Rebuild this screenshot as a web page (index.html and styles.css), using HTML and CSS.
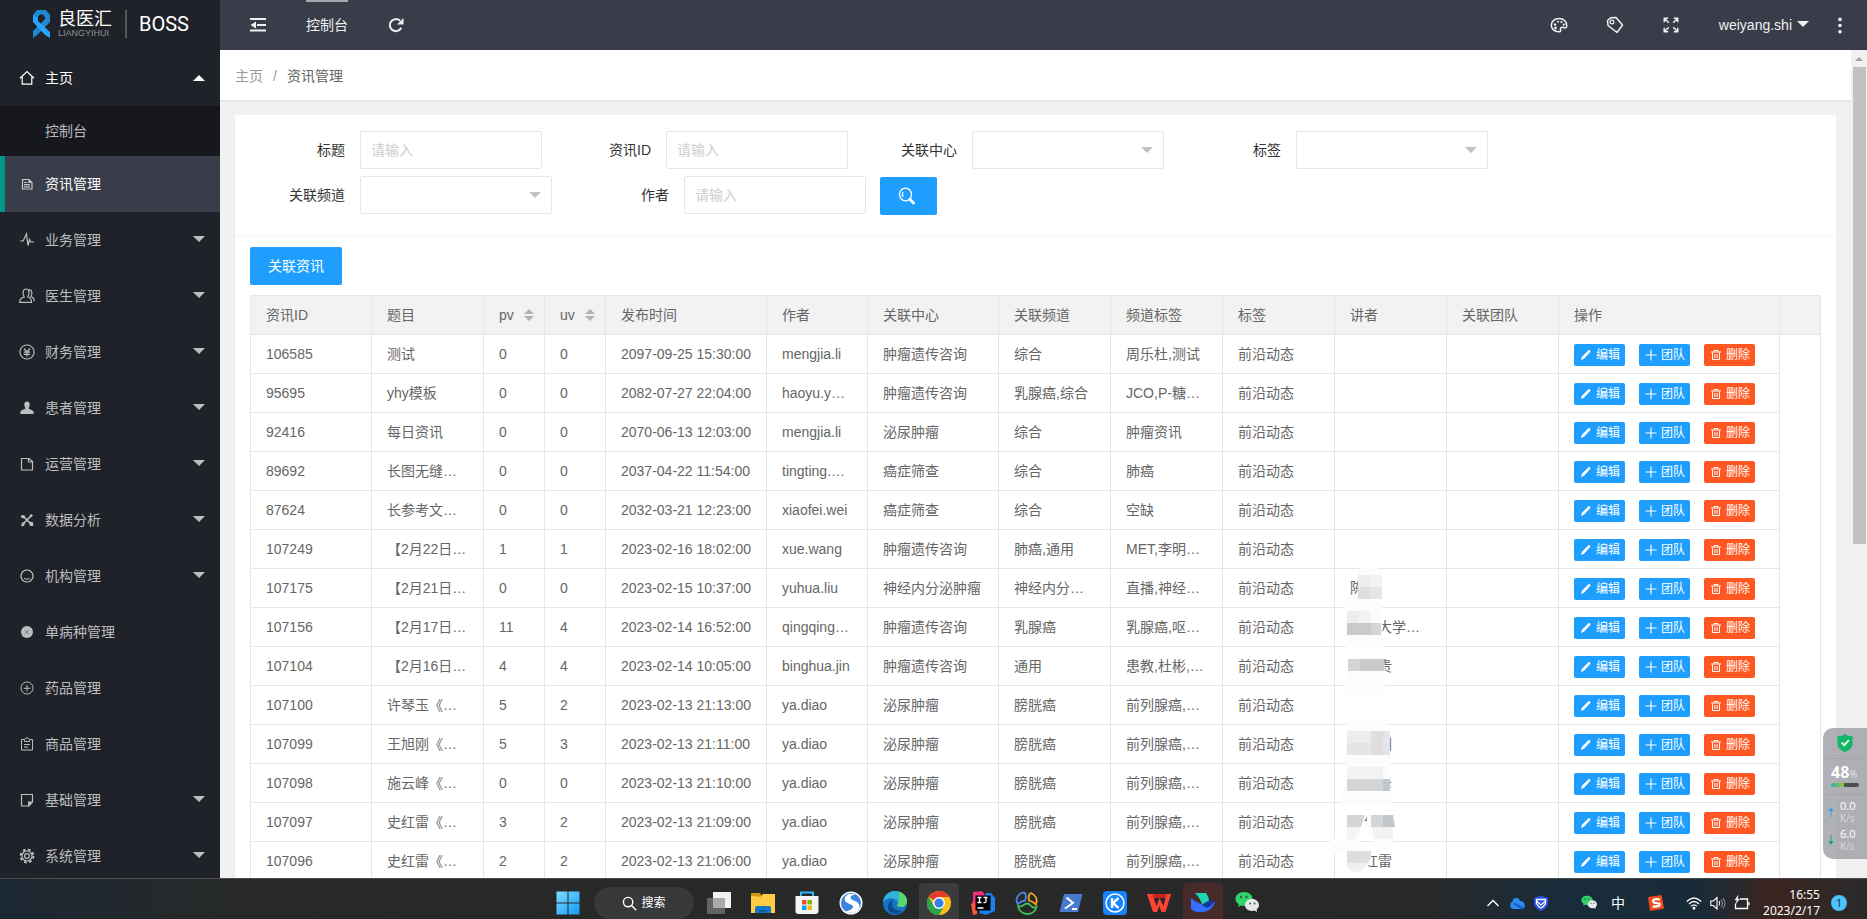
FILE: index.html
```html
<!DOCTYPE html>
<html lang="zh-CN">
<head>
<meta charset="utf-8">
<title>资讯管理</title>
<link rel="stylesheet" href="styles.css">
</head>
<body>
<svg class="sprite" aria-hidden="true">
  <symbol id="i-home" viewBox="0 0 16 16"><path d="M1 8.2 8 1.6l7 6.600M3.200 7v7.200h9.600V7" fill="none" stroke="currentColor" stroke-width="1.200"/></symbol>
  <symbol id="i-doc" viewBox="0 0 16 16"><path d="M3.500 3.500h6.500l3 3v6.500h-9.500z M10 3.500v3h3M5 6.500h3M5 8.700h6M5 10.900h6" fill="none" stroke="currentColor" stroke-width="1.200"/></symbol>
  <symbol id="i-pulse" viewBox="0 0 16 16"><path d="M1 9h3.200l1.300-3 2-4 1.500 11.500 1.500-6 1.200 2.500H15" fill="none" stroke="currentColor" stroke-width="1.200"/></symbol>
  <symbol id="i-users" viewBox="0 0 16 16"><path d="M5.200 9C3 5 4 1 7 1s4.200 4 1.800 8c3.200.8 3.700 2.500 3.700 5.300H.700C.7 11 2 9.800 5.200 9zM10 1.700c3.200.3 3.800 3.800 1.800 7 2.700.8 3.500 2.500 3.500 4.500" fill="none" stroke="currentColor" stroke-width="1.200"/></symbol>
  <symbol id="i-yen" viewBox="0 0 16 16"><path d="M8 1a7 7 0 1 0 .01 0zM5 4.500l3 3.500 3-3.500M4.800 8.200h6.400M4.800 10.300h6.400M8 8v4.500" fill="none" stroke="currentColor" stroke-width="1.200"/></symbol>
  <symbol id="i-user" viewBox="0 0 16 16"><path d="M8 1.500c2 0 3 1.500 2.700 3.500-.2 1.500-.9 2.500-1 3.300 0 1.500 5 1.200 5 4.200v1.500H1.300v-1.500c0-3 5-2.700 5-4.200-.1-.8-.8-1.800-1-3.300C5 3 6 1.500 8 1.500z" fill="currentColor"/></symbol>
  <symbol id="i-file" viewBox="0 0 16 16"><path d="M2.500 2.500h7.500l3.500 3v8.500h-11zM9.500 2.500v3.500h4" fill="none" stroke="currentColor" stroke-width="1.200"/></symbol>
  <symbol id="i-tools" viewBox="0 0 16 16"><path d="M4 4l8 8M12 4l-8 8" stroke="currentColor" stroke-width="1.700"/><path d="M2 3.200h3.500l.5 2.300-1.500 1-2.500-1zM14 3.200 12 5.500l-2-1L12 2zM3.200 10l2.800 2-1.500 2.200H2zM11.500 9.500l2.700 1V14h-2.700l-1.500-2.200z" fill="currentColor"/></symbol>
  <symbol id="i-face" viewBox="0 0 16 16"><path d="M8 2a6 6 0 1 0 .01 0z" fill="none" stroke="currentColor" stroke-width="1.200"/><path d="M5 10.500q3 1.600 6 0" fill="none" stroke="currentColor"/></symbol>
  <symbol id="i-cross" viewBox="0 0 16 16"><circle cx="8" cy="8" r="6" fill="currentColor"/><path d="m5.800 5.800 4.400 4.400m0-4.400-4.400 4.400" stroke="#777980"/></symbol>
  <symbol id="i-plusc" viewBox="0 0 16 16"><path d="M8 2a6 6 0 1 0 .01 0zM8 5v6.500M4.700 8.300h6.600" fill="none" stroke="currentColor"/></symbol>
  <symbol id="i-clip" viewBox="0 0 16 16"><path d="M5 3.500H2.500V14h11V3.500H11M5.500 5.500V3.500l1.500-1.500h2l1.500 1.500v2zM5 8.500h6M5 11h4" fill="none" stroke="currentColor"/></symbol>
  <symbol id="i-note" viewBox="0 0 16 16"><path d="M2.500 2.500h11v7.500l-3.500 4h-7.500z" fill="none" stroke="currentColor" stroke-width="1.200"/><path d="M9 9.500h4.500L9 14.500z" fill="currentColor"/></symbol>
  <symbol id="i-gear" viewBox="0 0 16 16"><circle cx="8" cy="8" r="6.400" fill="none" stroke="currentColor" stroke-width="2" stroke-dasharray="2.700 2.330"/><circle cx="8" cy="8" r="5" fill="none" stroke="currentColor" stroke-width="1.200"/><circle cx="8" cy="8" r="2.400" fill="none" stroke="currentColor" stroke-width="1.200"/></symbol>
  <symbol id="i-fold" viewBox="0 0 16 16"><path d="M0 2h16M7 8h9M0 13.500h16" stroke="currentColor" stroke-width="2"/><path d="M6 4.500v7L.5 8z" fill="currentColor"/></symbol>
  <symbol id="i-refresh" viewBox="0 0 16 16"><path d="M13.200 10.800A6 6 0 1 1 12 3.800" fill="none" stroke="currentColor" stroke-width="2"/><path d="M15.500 1v6.500H9z" fill="currentColor"/></symbol>
  <symbol id="i-palette" viewBox="0 0 18 18"><path d="M9 2.500c5 0 8 3.500 7.800 7.500-.2 2.500-2 2-3.600 1.500-2-.5-3.200.5-2.700 2 .4 1.500 0 2.300-1.700 2.300C4.500 15.700 1.300 13 1.300 9.300c0-4 3.500-6.800 7.700-6.800z" fill="none" stroke="currentColor" stroke-width="1.500"/><g fill="currentColor"><circle cx="5" cy="8.500" r="1.200"/><circle cx="5.500" cy="12" r="1.400"/><circle cx="8" cy="5.800" r="1"/><circle cx="11.500" cy="6" r="1.100"/><circle cx="13.800" cy="8.700" r="1.100"/></g></symbol>
  <symbol id="i-tag" viewBox="0 0 18 18"><path d="M1.500 4.500 5 1.700l5-.2 6.500 7.500-5.500 7.500L2 9.500z" fill="none" stroke="currentColor" stroke-width="1.500" stroke-linejoin="round"/><circle cx="6" cy="6" r="1.900" fill="none" stroke="currentColor" stroke-width="1.200"/></symbol>
  <symbol id="i-full" viewBox="0 0 16 16"><path d="M5.500 2H2v3.500M10.500 2H14v3.500M5.500 14H2v-3.500M10.500 14H14v-3.500M2 2l4 4M14 2l-4 4M2 14l4-4M14 14l-4-4" fill="none" stroke="currentColor" stroke-width="1.300"/></symbol>
  <symbol id="i-more" viewBox="0 0 16 16"><g fill="currentColor"><circle cx="8" cy="3" r="1.600"/><circle cx="8" cy="8.500" r="1.600"/><circle cx="8" cy="14" r="1.600"/></g></symbol>
  <symbol id="i-pen" viewBox="0 0 12 12"><path d="M1 11l.9-3.300L8.200 1.500c.7-.7 1.200-.7 1.800-.1s.6 1.200 0 1.800L4 9.700z" fill="currentColor"/></symbol>
  <symbol id="i-plus" viewBox="0 0 12 12"><path d="M6 .5v11M.5 6h11" stroke="currentColor" stroke-width="1.100"/></symbol>
  <symbol id="i-trash" viewBox="0 0 12 12"><path d="M1 3h10M4 2.800V1.500h4v1.300M2.500 3.500v7h7v-7M4.900 5v4M7.100 5v4" fill="none" stroke="currentColor"/></symbol>
  <symbol id="i-wechat" viewBox="0 0 24 24"><path d="M9 1c5 0 8.500 3 8.500 7s-3.500 7-8.500 7c-1 0-2-.1-2.800-.4L3 16l.8-2.800C1.800 12 .5 10 .5 8 .5 4 4 1 9 1z" fill="#2fd16a"/><path d="M17 8c4 0 7 2.700 7 6 0 1.800-1 3.400-2.400 4.500l.6 2.500-2.800-1.400c-.8.200-1.600.3-2.400.3-4 0-7-2.600-7-5.900s3-6 7-6z" fill="#e8e8e8"/><g fill="#2a6b43"><circle cx="6" cy="6" r="1.200"/><circle cx="11.500" cy="6" r="1.200"/><circle cx="15" cy="12.500" r="1"/><circle cx="19.500" cy="12.500" r="1"/></g></symbol>
</svg>

<div class="app">
  <nav class="side" aria-label="主菜单">
    <div class="logo">
      <svg class="ribbon" viewBox="0 0 17 28" aria-hidden="true"><path d="M0 5 4 0h9l4 5v7L4 25l-4 3v-7L12 9V7L10 4.500H7L5 7v4L0 9z" fill="#1e88d2"/><path d="M0 5 5 8v3l12 11v6l-5-3L0 12z" fill="#2ba2ff"/></svg>
      <div class="brand"><span class="brand-cn">良医汇</span><span class="brand-en">LIANGYIHUI</span></div>
      <span class="boss">BOSS</span>
    </div>
    <ul class="menu">
      <li><a class="item open" href="#"><svg class="ico"><use href="#i-home"/></svg>主页<i class="caret up"></i></a>
        <ul class="sub">
          <li><a class="item short" href="#">控制台</a></li>
          <li><a class="item active" href="#" aria-current="page"><svg class="ico"><use href="#i-doc"/></svg>资讯管理</a></li>
        </ul>
      </li>
      <li><a class="item" href="#"><svg class="ico"><use href="#i-pulse"/></svg>业务管理<i class="caret"></i></a></li>
      <li><a class="item" href="#"><svg class="ico"><use href="#i-users"/></svg>医生管理<i class="caret"></i></a></li>
      <li><a class="item" href="#"><svg class="ico"><use href="#i-yen"/></svg>财务管理<i class="caret"></i></a></li>
      <li><a class="item" href="#"><svg class="ico"><use href="#i-user"/></svg>患者管理<i class="caret"></i></a></li>
      <li><a class="item" href="#"><svg class="ico"><use href="#i-file"/></svg>运营管理<i class="caret"></i></a></li>
      <li><a class="item" href="#"><svg class="ico"><use href="#i-tools"/></svg>数据分析<i class="caret"></i></a></li>
      <li><a class="item" href="#"><svg class="ico"><use href="#i-face"/></svg>机构管理<i class="caret"></i></a></li>
      <li><a class="item" href="#"><svg class="ico"><use href="#i-cross"/></svg>单病种管理</a></li>
      <li><a class="item" href="#"><svg class="ico"><use href="#i-plusc"/></svg>药品管理</a></li>
      <li><a class="item" href="#"><svg class="ico"><use href="#i-clip"/></svg>商品管理</a></li>
      <li><a class="item" href="#"><svg class="ico"><use href="#i-note"/></svg>基础管理<i class="caret"></i></a></li>
      <li><a class="item" href="#"><svg class="ico"><use href="#i-gear"/></svg>系统管理<i class="caret"></i></a></li>
    </ul>
  </nav>

  <div class="content">
    <header class="top">
      <div class="top-group">
        <button class="top-item" aria-label="折叠菜单"><svg class="ico"><use href="#i-fold"/></svg></button>
        <a class="top-item current" href="#">控制台</a>
        <button class="top-item" aria-label="刷新"><svg class="ico"><use href="#i-refresh"/></svg></button>
      </div>
      <div class="top-group right">
        <button class="top-item" aria-label="主题"><svg class="ico"><use href="#i-palette"/></svg></button>
        <button class="top-item" aria-label="便签"><svg class="ico"><use href="#i-tag"/></svg></button>
        <button class="top-item" aria-label="全屏"><svg class="ico"><use href="#i-full"/></svg></button>
        <button class="top-item user">weiyang.shi<i class="caret"></i></button>
        <button class="top-item more" aria-label="更多"><svg class="ico"><use href="#i-more"/></svg></button>
      </div>
    </header>

    <div class="view">
      <main class="page">
        <nav class="crumbs" aria-label="位置"><a href="#">主页</a><span class="slash">/</span><span>资讯管理</span></nav>
        <section class="card">
          <form class="filters">
            <div class="row">
              <div class="field"><label for="f-title">标题</label><input id="f-title" type="text" placeholder="请输入"></div>
              <div class="field"><label for="f-id">资讯ID</label><input id="f-id" type="text" placeholder="请输入"></div>
              <div class="field"><label for="f-center">关联中心</label><span class="pick"><select id="f-center"><option></option></select></span></div>
              <div class="field"><label for="f-tag">标签</label><span class="pick"><select id="f-tag"><option></option></select></span></div>
            </div>
            <div class="row">
              <div class="field"><label for="f-channel">关联频道</label><span class="pick"><select id="f-channel"><option></option></select></span></div>
              <div class="field"><label for="f-author">作者</label><input id="f-author" type="text" placeholder="请输入"></div>
              <button class="btn search" type="button" aria-label="搜索"><svg viewBox="0 0 18 18" aria-hidden="true"><ellipse cx="7.500" cy="7.500" rx="6" ry="6.300" fill="none" stroke="currentColor" stroke-width="1.300"/><path d="M5 5q-1.400 2.500 0 5" fill="none" stroke="currentColor" stroke-width="1.200"/><path d="m11.800 12.200 3.700 3.700" stroke="currentColor" stroke-width="2.800" stroke-linecap="round"/></svg></button>
            </div>
          </form>
          <div class="body">
            <button class="btn" type="button">关联资讯</button>
            <div class="grid">
              <table>
                <colgroup><col class="w121"><col class="w112"><col class="w61"><col class="w61"><col class="w161"><col class="w101"><col class="w131"><col class="w112"><col class="w112"><col class="w112"><col class="w112"><col class="w112"><col class="w221"><col></colgroup>
                <thead><tr><th>资讯ID</th><th>题目</th><th><span class="sort">pv<i></i></span></th><th><span class="sort">uv<i></i></span></th><th>发布时间</th><th>作者</th><th>关联中心</th><th>关联频道</th><th>频道标签</th><th>标签</th><th>讲者</th><th>关联团队</th><th>操作</th><th></th></tr></thead>
                <tbody id="rows"></tbody>
              </table>
              <svg class="mask" viewBox="1330 565 70 310" aria-hidden="true">
                <g fill="#fcfcfc">
                  <path d="M1358 575q0-8 11-9 12 1 13 9v35l1 37h-37v-37l-3-1v-9q4-6 15-6z"/>
                  <path d="M1348 659h36l1 12v12l1 12h-41v-12l3-12z"/>
                  <path d="M1347 719h41l2 36v12l1 36h-49v-13l5-11v-12h-2v-12l2-12z"/>
                  <path d="M1347 815h15v6h5v-6h21l5 26q-4 8-11 9-7-1-10-9l-4-12h-3q-1 4-6 12v7q10 3 13 10l-5 10q-12 8-22-4v-12h-12q-5-4-3-13h14z"/>
                </g>
                <path fill="#ededed" d="M1358 575h12v12h-12zM1347 611h12v12h-12zM1347 731h24v12h-24z"/>
                <path fill="#f3f3f3" d="M1370 575h12v12h-12zM1359 611h12v12h-12zM1347 767h36v12h-36zM1347 827h14l-6 12h-8zM1372 827h21v12h-18z"/>
                <path fill="#dedede" d="M1358 587h12v12h-12zM1371 731h12v24h-12zM1347 851h24q1 8-4 12h-20z"/>
                <path fill="#e4e5e7" d="M1370 587h12v12h-12zM1383 731h7v24h-7zM1347 743h24v12h-24z"/>
                <path fill="#cacaca" d="M1347 623h24v12h-24zM1360 659h24v12h-24z"/>
                <path fill="#d4d5d6" d="M1371 623h10v12h-10zM1348 659h12v12h-12zM1347 779h36v12h-36zM1347 815h18l-4 12h-14zM1371 815h12v12h-12z"/>
                <path fill="#c4c7ca" d="M1383 779h7v12h-7zM1383 815h10l2 12h-12z"/>
                <path fill="#efefef" d="M1347 863h20q-5 9-10 9-6 0-10-6z"/>
              </svg>
            </div>
          </div>
        </section>
      </main>
      <div class="scrollbar" aria-hidden="true"><i class="arrow"></i><i class="thumb"></i></div>
    </div>
  </div>

  <aside class="meter">
    <svg class="shield" viewBox="0 0 16 19" aria-hidden="true"><path d="M8 0c3 2 5 2.500 8 2.500V10c0 4.500-4 7.500-8 9-4-1.500-8-4.500-8-9V2.500C3 2.500 5 2 8 0z" fill="#0fb865"/><path d="m4.500 9 2.700 2.800L12 6.500" stroke="#fff" stroke-width="1.800" fill="none"/></svg>
    <div class="load"><b>48</b><small>%</small></div>
    <div class="bar"></div>
    <div class="rates">
      <div class="net"><svg class="upload" viewBox="0 0 6 10"><path d="M3 0l2.500 4h-2v6h-1V4h-2z" fill="currentColor"/></svg><span>0.0<small>K/s</small></span></div>
      <div class="net"><svg class="download" viewBox="0 0 6 10"><path d="M3 10L.5 6h2V0h1v6h2z" fill="currentColor"/></svg><span>6.0<small>K/s</small></span></div>
    </div>
  </aside>
</div>

<footer class="taskbar">
  <div class="tb">
    <div class="apps">
      <button class="app-btn" aria-label="开始"><svg viewBox="0 0 24 24"><defs><linearGradient id="g-win" x1="0" y1="0" x2="1" y2="1"><stop offset="0" stop-color="#7fdcff"/><stop offset="1" stop-color="#109bf5"/></linearGradient></defs><path d="M.5.5h11v11H.5zM12.500.5h11v11h-11zM.5 12.500h11v11H.5zM12.500 12.500h11v11h-11z" fill="url(#g-win)"/></svg></button>
      <button class="find"><svg viewBox="0 0 16 16"><circle cx="6.500" cy="6.500" r="5" fill="none" stroke="#fff" stroke-width="1.500"/><path d="m10.200 10.200 5 5" stroke="#fff" stroke-width="1.500"/></svg>搜索</button>
      <button class="app-btn" aria-label="任务视图"><svg viewBox="0 0 24 24"><path d="M6 1h18v16H6z" fill="#f2f2f2"/><path d="M0 7h18v16H0z" fill="#777" opacity=".75"/><path d="M6 7h12v10H6z" fill="#aaa"/></svg></button>
      <button class="app-btn run" aria-label="文件资源管理器"><svg viewBox="0 0 24 24"><path d="M0 2h9l2 3H0z" fill="#d59412"/><path d="M0 5l10 .2L12 3h12v19H0z" fill="#ffcd45"/><path d="M4 17q0-2 2-2h12q2 0 2 2v5H4z" fill="#1175c8"/><path d="M8 19h8v1.500H8z" fill="#0b5596"/></svg></button>
      <button class="app-btn" aria-label="应用商店"><svg viewBox="0 0 24 24"><path d="M6 6V1.500h12V6" fill="none" stroke="#35b5f2" stroke-width="2"/><path d="M.5 5h23v15q0 3-3 3h-17q-3 0-3-3z" fill="#f4f4f4"/><path d="M7 9h4.500v4.500H7z" fill="#f25022"/><path d="M12.500 9H17v4.500h-4.500z" fill="#7fba00"/><path d="M7 14.500h4.500V19H7z" fill="#00a4ef"/><path d="M12.500 14.500H17V19h-4.500z" fill="#ffb900"/></svg></button>
      <button class="app-btn run" aria-label="浏览器"><svg viewBox="0 0 24 24"><circle cx="12" cy="12" r="11.500" fill="#f4f8fc"/><circle cx="12" cy="12" r="10" fill="#3d84dd"/><path d="M17 3.500C10 1 4.500 5 6 9.500c1.500 3.500 8 3.500 8 6s-4 4.500-7.500 4.500c6 4 14 1 14-5 0-5.500-9-5.500-9-8 0-2 3-3.500 5.500-3.500z" fill="#fff"/></svg></button>
      <button class="app-btn run" aria-label="Edge"><svg viewBox="0 0 24 24"><circle cx="12" cy="12" r="12" fill="#1474c4"/><path d="M0 11C1 4 6 0 12 0c7 0 12 5 12 10 0 4-3 6-6.500 6-3 0-4-1-3-2.500C17 9 9 5 3 8.500z" fill="#2fb4d8"/><path d="M15 .5c6 1.500 9 5.500 9 9.500 0 4-3 6-6.500 6-3 0-4-1-3-2.500C16.500 10 17 4 15 .5z" fill="#5bd66e"/><path d="M10 9c-3 5 0 11 9 11-7 7-18 0-13-8q1.500-2.500 4-3z" fill="#0d4a8c"/></svg></button>
      <button class="app-btn run on" aria-label="Chrome"><svg viewBox="0 0 24 24"><circle cx="12" cy="12" r="12" fill="#fbc116"/><path d="M12 12 1.600 6A12 12 0 0 1 22.400 6H12z" fill="#e33b2e"/><path d="M1.600 6A12 12 0 0 0 12 24l5.200-9L12 12 6.800 15z" fill="#2ba24c"/><circle cx="12" cy="12" r="6" fill="#fff"/><circle cx="12" cy="12" r="4.600" fill="#3a7de8"/></svg></button>
      <button class="app-btn run" aria-label="IntelliJ IDEA"><svg viewBox="0 0 24 24"><path d="M2 1l9-1 3 4-8 8-6 3 2-5z" fill="#f0317c"/><path d="M0 13l6-2v12l-4 1z" fill="#fb5a3a"/><path d="M15 2l5 0 4 5v13l-9 4-7-2z" fill="#1b7ff0"/><path d="M4.500 4.500h15v15h-15z" fill="#000"/><path d="M6.500 6.500h4M8.500 6.500v5M6.500 11.500h4M12.500 6.500h4M15 6.500v4q0 1.300-2.500 1M6.500 17h6" stroke="#fff" stroke-width="1.300" fill="none"/></svg></button>
      <button class="app-btn run" aria-label="数据库客户端"><svg viewBox="0 0 24 24" fill="none" stroke-width="1.800"><path d="M3 13C0 10 2 3 8 1.500c3 0 3.500 4 2 8Q6 10 3 13z" stroke="#4a83e8"/><path d="M14 9.500c-1-3 0-7 2-7.500 5 2 7 7 5 11.500Q18 10.500 14 9.500z" stroke="#f5a51d"/><path d="M3 15c2 10.500 16 10.500 18.500 1-3 1.500-5 0-7-2.500-1.500-1.500-3.500-1-5 0-2 1.700-4 2.500-6.500 1.500z" stroke="#42c254"/></svg></button>
      <button class="app-btn" aria-label="PowerShell"><svg viewBox="0 0 24 24"><path d="M5 3h18.500L19 21H.5z" fill="#4679cf"/><path d="m7.500 6.500 6.500 5.500-8 5.500M13 18h5" fill="none" stroke="#fff" stroke-width="2"/></svg></button>
      <button class="app-btn" aria-label="K"><svg viewBox="0 0 24 24"><rect width="24" height="24" rx="4" fill="#1784ff"/><circle cx="12" cy="12" r="9" fill="none" stroke="#fff" stroke-width="1.500"/><path d="M9 7v10M15.500 7 10 12l5.500 5" fill="none" stroke="#fff" stroke-width="2.400"/></svg></button>
      <button class="app-btn run" aria-label="WPS"><svg viewBox="0 0 24 24"><path d="M0 3h24l-1.500 4H1.500z" fill="#c9251c"/><path d="M0 3h5.500l4 12 3-8 4 8 3-12H24l-5.500 18h-4l-2.200-6L10 21H6z" fill="#fb4432"/></svg></button>
      <button class="app-btn run hot" aria-label="Lark"><svg viewBox="0 0 24 24"><path d="M4 2h11q3 4 3 8l-6 5Q9 7 4 2z" fill="#1ed6b5"/><path d="M0 7q7 6 15 7 5-4 9-3-3 9-12 10-7 1-12-3z" fill="#3370ff"/><path d="M11 14q6-6 13-4-3 5-8 7z" fill="#133c9a"/></svg></button>
      <button class="app-btn run" aria-label="微信"><svg viewBox="0 0 24 24"><use href="#i-wechat"/></svg></button>
    </div>
    <div class="tray">
      <svg viewBox="0 0 16 16"><path d="m2.500 11 5.500-5.500L13.500 11" fill="none" stroke="#fff" stroke-width="1.300"/></svg>
      <svg viewBox="0 0 16 16"><path d="M4 14a4 4 0 0 1-.5-7.500C4 2 9.500 1.500 11 6c5 0 6.500 6 2.500 8z" fill="#2b8bf0"/><path d="M4 9q3-3 11 4.800-1 .2-3 .2z" fill="#0f5fc4"/></svg>
      <svg viewBox="0 0 16 16"><path d="M8 .5 15 3v5c0 4-3 6-7 8-4-2-7-4-7-8V3z" fill="#2b50e6"/><path d="M3.500 4.500h9v4Q11 11.500 8 13q-3-1.500-4.500-4.500zM4 6.500 8 10l4-3.500" fill="none" stroke="#fff" stroke-width="1.300"/></svg>
      <svg class="far" viewBox="0 0 24 24"><use href="#i-wechat"/></svg>
      <span class="ime">中</span>
      <svg class="sogou" viewBox="0 0 16 16"><path d="M0 2 13.500 0 16 13.500 2 16z" fill="#ef4a1c"/><path d="M12 4.500Q5 3.500 5 6t6.500 2.500Q13 12 4.500 11.500" fill="none" stroke="#fff" stroke-width="2.200"/></svg>
      <svg viewBox="0 0 16 16" fill="none" stroke="#fff" stroke-width="1.300"><path d="M.8 6.500q7.200-7 14.400 0M3 9q5-5 10 0M5.200 11.300q2.800-2.800 5.600 0"/><circle cx="8" cy="13.200" r=".8" fill="#fff"/></svg>
      <svg viewBox="0 0 16 16" fill="none" stroke="#fff" stroke-width="1.100"><path d="M.8 6v4.500h2.500L7 14V2.500L3.300 6zM9 6q1.500 2.200 0 4.500"/><path d="M11 4.500q3 3.800 0 7.500M13 3q4 5 0 10.500" stroke="#8b9196"/></svg>
      <svg viewBox="0 0 16 16" fill="none" stroke="#fff" stroke-width="1.300"><path d="M6 4h7.500v9.500h-12V9M15 7.300v3"/><path d="m4 .5-3 4.500h2.300L1.500 9l4-5H3.500z" fill="#fff" stroke-width=".5"/></svg>
      <div class="clock"><time>16:55</time><time>2023/2/17</time></div>
      <span class="badge">1</span>
    </div>
  </div>
</footer>
<script src="app.js"></script>
</body>
</html>
```

FILE: app.js
```js
const records = [
  ["106585", "测试", 0, 0, "2097-09-25 15:30:00", "mengjia.li", "肿瘤遗传咨询", "综合", "周乐杜,测试", "前沿动态", ""],
  ["95695", "yhy模板", 0, 0, "2082-07-27 22:04:00", "haoyu.y…", "肿瘤遗传咨询", "乳腺癌,综合", "JCO,P-糖…", "前沿动态", ""],
  ["92416", "每日资讯", 0, 0, "2070-06-13 12:03:00", "mengjia.li", "泌尿肿瘤", "综合", "肿瘤资讯", "前沿动态", ""],
  ["89692", "长图无缝…", 0, 0, "2037-04-22 11:54:00", "tingting.…", "癌症筛查", "综合", "肺癌", "前沿动态", ""],
  ["87624", "长参考文…", 0, 0, "2032-03-21 12:23:00", "xiaofei.wei", "癌症筛查", "综合", "空缺", "前沿动态", ""],
  ["107249", "【2月22日…", 1, 1, "2023-02-16 18:02:00", "xue.wang", "肿瘤遗传咨询", "肺癌,通用", "MET,李明…", "前沿动态", ""],
  ["107175", "【2月21日…", 0, 0, "2023-02-15 10:37:00", "yuhua.liu", "神经内分泌肿瘤", "神经内分…", "直播,神经…", "前沿动态", "陈"],
  ["107156", "【2月17日…", 11, 4, "2023-02-14 16:52:00", "qingqing…", "肿瘤遗传咨询", "乳腺癌", "乳腺癌,呕…", "前沿动态", "　　大学…"],
  ["107104", "【2月16日…", 4, 4, "2023-02-14 10:05:00", "binghua.jin", "肿瘤遗传咨询", "通用", "患教,杜彬,…", "前沿动态", "　　贵"],
  ["107100", "许琴玉《…", 5, 2, "2023-02-13 21:13:00", "ya.diao", "泌尿肿瘤", "膀胱癌", "前列腺癌,…", "前沿动态", ""],
  ["107099", "王旭刚《…", 5, 3, "2023-02-13 21:11:00", "ya.diao", "泌尿肿瘤", "膀胱癌", "前列腺癌,…", "前沿动态", "　　刚"],
  ["107098", "施云峰《…", 0, 0, "2023-02-13 21:10:00", "ya.diao", "泌尿肿瘤", "膀胱癌", "前列腺癌,…", "前沿动态", "　　峰"],
  ["107097", "史红雷《…", 3, 2, "2023-02-13 21:09:00", "ya.diao", "泌尿肿瘤", "膀胱癌", "前列腺癌,…", "前沿动态", "　红"],
  ["107096", "史红雷《…", 2, 2, "2023-02-13 21:06:00", "ya.diao", "泌尿肿瘤", "膀胱癌", "前列腺癌,…", "前沿动态", "　红雷"]
];

const action = (kind, icon, text) =>
  `<button type="button" class="act ${kind}"><svg aria-hidden="true"><use href="#i-${icon}"/></svg>${text}</button>`;

const actions = `<div class="acts">${action("edit", "pen", "编辑")}${action("team", "plus", "团队")}${action("del", "trash", "删除")}</div>`;

document.getElementById("rows").innerHTML = records
  .map(r => `<tr>${r.map(v => `<td>${v}</td>`).join("")}<td></td><td>${actions}</td><td></td></tr>`)
  .join("");
```

FILE: styles.css
```css
* { box-sizing: border-box; }
html, body { height: 100%; margin: 0; }
body {
  display: flex;
  flex-direction: column;
  overflow: hidden;
  font: 14px/20px "Liberation Sans", "Noto Sans CJK SC", sans-serif;
  color: #333;
  background: #f1f1f1;
}
button, input, select { font: inherit; margin: 0; }
button { border: 0; background: none; color: inherit; padding: 0; cursor: pointer; }
a { color: inherit; text-decoration: none; }
ul { list-style: none; margin: 0; padding: 0; }
.sprite { display: none; }
.ico { width: 16px; height: 16px; flex: none; }

.app { flex: 1; min-height: 0; display: flex; position: relative; overflow: hidden; }

/* sidebar */
.side { width: 220px; flex: none; background: #20222a; color: #bcbdbf; overflow: hidden; }
.logo { height: 50px; display: flex; align-items: center; padding: 0 0 2px 33px; box-shadow: 0 1px 2px rgba(0, 0, 0, .15); }
.ribbon { width: 17px; height: 28px; }
.brand { display: flex; flex-direction: column; gap: 1px; margin-left: 8px; width: 69px; border-right: 2px solid #55575d; color: #fff; }
.brand-cn { font-size: 18px; line-height: 18px; }
.brand-en { font-size: 9px; line-height: 9px; color: #8e9094; }
.boss { margin-left: 12px; font: 20px/28px Roboto, sans-serif; color: #fff; }
.item { position: relative; display: flex; align-items: center; height: 56px; padding: 0 15px 0 45px; }
.item .ico { margin-left: -26px; margin-right: 10px; }
.item .caret { margin-left: auto; }
.item.short { height: 50px; }
.open, .active { color: #fff; }
.sub { background: #17181d; color: #b9babb; }
.active { background: #393d49; border-left: 5px solid #009688; padding-left: 40px; }
.active .ico { color: #c4c5c8; }
.caret { display: block; border: 6px solid transparent; border-top-color: currentColor; border-bottom: 0; margin-bottom: 3px; }
.caret.up { border: 6px solid transparent; border-bottom-color: currentColor; border-top: 0; margin-bottom: 0; }

/* header */
.content { flex: 1; min-width: 0; display: flex; flex-direction: column; }
.top { height: 50px; flex: none; display: flex; justify-content: space-between; background: #393d49; color: #f0f0f1; padding: 0 19px 0 10px; }
.top-group { display: flex; }
.top-item { display: flex; align-items: center; height: 50px; padding: 0 20px; }
.right .top-item .ico { width: 18px; height: 18px; margin: 0 -1px; }
.current { position: relative; }
.current::before { content: ""; position: absolute; left: 20px; right: 20px; top: 0; height: 2px; background: #a6a8ad; }
.user { gap: 5px; padding-right: 15px; }
.more { padding: 0 0 0 8px; }

/* page */
.view { flex: 1; min-height: 0; display: flex; }
.page { flex: 1; min-width: 0; overflow: hidden; }
.crumbs { display: flex; align-items: center; height: 50px; padding: 2px 15px 0; background: #fff; color: #666; box-shadow: 0 1px 2px rgba(0, 0, 0, .1); }
.crumbs a { color: #999; }
.slash { margin: 0 10px; color: #999; }
.card { margin: 15px; background: #fff; border-radius: 2px; box-shadow: 0 1px 2px rgba(0, 0, 0, .05); }
.filters { padding: 16px 15px 21px; border-bottom: 1px solid #f4f4f4; display: grid; gap: 7px; }
.row { display: flex; gap: 14px; align-items: flex-start; }
.field { display: flex; }
.field label { width: 110px; padding: 9px 15px; text-align: right; }
.field input, .field select { height: 38px; border: 1px solid #e6e6e6; border-radius: 2px; background: #fff; outline: 0; }
.field input { width: 182px; padding: 0 10px; }
.field input::placeholder { color: #cdcdcd; }
.pick { position: relative; width: 200px; height: 38px; }
.pick select { width: 192px; appearance: none; padding: 0 30px 0 10px; }
.pick::after { content: ""; position: absolute; right: 19px; top: 16px; border: 6px solid transparent; border-top-color: #c2c2c2; border-bottom: 0; pointer-events: none; }
.btn { height: 38px; padding: 0 18px; border-radius: 2px; background: #1e9fff; color: #fff; }
.search { width: 57px; margin-top: 1px; display: flex; align-items: center; }
.search svg { width: 18px; height: 18px; flex: none; }
.body { padding: 10px 15px 15px; }
.grid { position: relative; margin-top: 10px; border: 1px solid #e6e6e6; }
.body > .btn { display: block; }

table { width: 100%; table-layout: fixed; border-collapse: separate; border-spacing: 0; color: #666; }
th, td { height: 39px; padding: 0 15px; text-align: left; font-weight: normal; white-space: nowrap; overflow: hidden; border: solid #e6e6e6; border-width: 0 1px 1px 0; }
th { background: #f2f2f2; }
th:last-child { border-right: 0; }
td:last-child { border: 0; }
.w61 { width: 61px; }
.w101 { width: 101px; }
.w112 { width: 112px; }
.w121 { width: 121px; }
.w131 { width: 131px; }
.w161 { width: 161px; }
.w221 { width: 221px; }
.sort { display: flex; align-items: center; gap: 10px; }
.sort i { display: grid; gap: 2px; }
.sort i::before, .sort i::after { content: ""; border: 5px solid transparent; }
.sort i::before { border-top: 0; border-bottom-color: #b2b2b2; }
.sort i::after { border-bottom: 0; border-top-color: #b2b2b2; }
.acts { display: flex; gap: 14px; padding-top: 2px; }
.act { display: flex; align-items: center; gap: 4px; height: 22px; padding: 0 5px 0 6px; border-radius: 2px; background: #1e9fff; color: #fff; font-size: 12px; }
.act svg { width: 12px; height: 12px; }
.act.del { background: #ff5722; }
.mask { position: absolute; left: 1079px; top: 269px; width: 70px; height: 310px; }

.scrollbar { width: 16px; flex: none; background: #f1f1f1; display: flex; flex-direction: column; align-items: center; }
.arrow { border: 4px solid transparent; border-bottom-color: #a3a3a3; border-top: 0; margin: 7px 0 6px; }
.thumb { width: 13px; height: 477px; max-height: 80%; background: #c1c1c1; }

/* floating system meter */
.meter { position: absolute; right: 0; bottom: 19px; width: 44px; padding: 6px 3px 7px; border-radius: 10px 0 0 10px; background: rgba(160, 162, 168, .84); color: #fff; font-family: "Open Sans", sans-serif; }
.shield { display: block; width: 16px; height: 18px; margin: 0 auto 6px 11px; }
.load { display: flex; align-items: baseline; border-top: 1px solid #a3a5a9; padding: 4px 0 0 5px; line-height: 18px; }
.load b { font-size: 16px; }
.load small { font-size: 10px; color: #e2e2e4; }
.bar { height: 4px; width: 28px; margin: 0 0 7px 5px; border-radius: 2px; background: linear-gradient(90deg, #2bb5a0, #9cc53c 46%, #4c4d57 46%); }
.rates { display: grid; gap: 4px; padding-top: 5px; border-top: 1px solid #a3a5a9; }
.net { display: flex; align-items: center; font-size: 11px; line-height: 12px; }
.net svg { width: 6px; height: 10px; margin: 0 6px 0 2px; }
.net small { display: block; font-size: 10px; color: #dadbdd; }
.upload { color: #2aa5ee; }
.download { color: #15ac5c; }

/* taskbar */
.taskbar { flex: none; height: 41px; overflow: hidden; border-top: 1px solid #4b4b4b; background: linear-gradient(90deg, #1b2732, #272929 12%, #282828 76%, #182c3b 84%, #182b39 91%, #3c251f 95%, #292a2a); color: #fff; }
.tb { height: 48px; display: grid; grid-template-columns: 1fr auto 1fr; align-items: center; }
.apps { grid-column: 2; display: flex; align-items: center; padding-right: 52px; }
.app-btn { position: relative; width: 44px; height: 48px; display: grid; place-items: center; }
.app-btn svg { width: 24px; height: 24px; z-index: 1; }
.find { display: flex; align-items: center; justify-content: center; gap: 4px; width: 100px; height: 32px; margin: 0 3px 0 4px; border-radius: 16px; background: #373839; font-size: 12px; color: #fff; }
.find svg { width: 15px; height: 15px; }
.run::after { content: ""; position: absolute; bottom: 6px; left: 20px; width: 5px; height: 2px; background: #8d8d8d; }
.on::before, .hot::before { content: ""; position: absolute; inset: 4px 2px; border-radius: 4px; background: #3a3b3b; }
.hot::before { background: #482a2b; }
.on::after { left: 14px; width: 16px; background: #4cb8f5; }
.hot::after { background: #f28d96; }
.tray { display: flex; justify-content: flex-end; align-items: center; gap: 8px; padding-right: 20px; }
.tray svg { width: 16px; height: 16px; flex: none; }
.tray .far { margin-left: 24px; }
.ime { width: 14px; margin: 0 3px 0 6px; }
.tray .sogou { margin: 0 14px 0 12px; }
.clock { display: flex; flex-direction: column; text-align: right; width: 62px; font: 12px/16px "Noto Sans", sans-serif; white-space: nowrap; }
.badge { width: 16px; height: 16px; margin-left: 3px; border-radius: 8px; background: #4cc2ff; color: #1b2a33; font: 10px/16px "Noto Sans", sans-serif; text-align: center; }
```
